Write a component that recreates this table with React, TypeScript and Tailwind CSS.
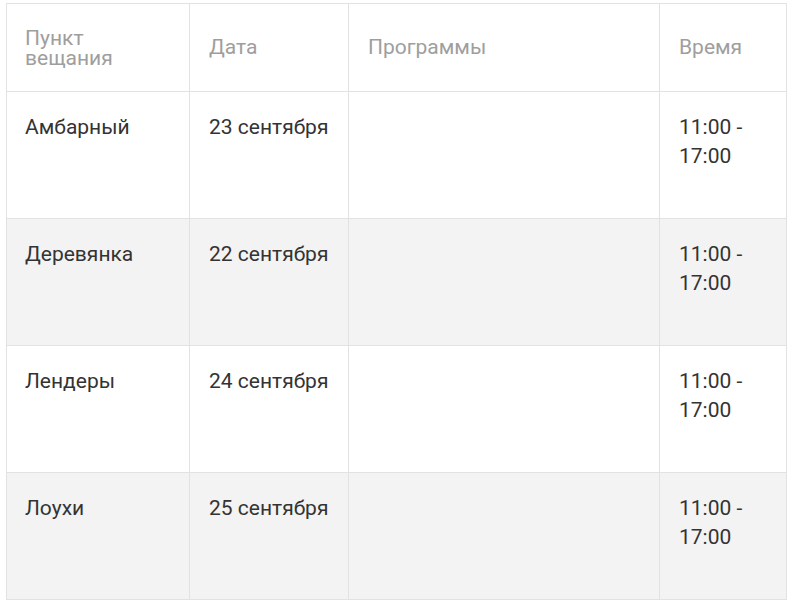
const rows = [
  { place: "Амбарный", date: "23 сентября" },
  { place: "Деревянка", date: "22 сентября" },
  { place: "Лендеры", date: "24 сентября" },
  { place: "Лоухи", date: "25 сентября" },
];

export default function App() {
  return (
    <div className="bg-white min-h-screen pl-[6px] pt-[3px] font-['Roboto',sans-serif]">
      <table className="w-[780px] table-fixed border-collapse border border-[#e2e2e2] text-[21px]">
        <colgroup>
          <col className="w-[183px]" />
          <col className="w-[159px]" />
          <col className="w-[311px]" />
          <col className="w-[127px]" />
        </colgroup>
        <thead>
          <tr className="h-[88px] text-[#9e9e9e] text-left">
            <th className="border border-[#e2e2e2] pl-[18px] pr-[20px] align-middle font-normal leading-[20px]">
              Пункт вещания
            </th>
            <th className="border border-[#e2e2e2] pl-[19px] align-middle font-normal leading-[29px]">
              Дата
            </th>
            <th className="border border-[#e2e2e2] pl-[19px] align-middle font-normal leading-[29px]">
              Программы
            </th>
            <th className="border border-[#e2e2e2] pl-[19px] align-middle font-normal leading-[29px]">
              Время
            </th>
          </tr>
        </thead>
        <tbody>
          {rows.map((r, i) => (
            <tr
              key={r.place}
              className={`h-[127px] text-[#333333] leading-[29px] ${
                i % 2 === 1 ? "bg-[#f3f3f3]" : "bg-white"
              }`}
            >
              <td className="border border-[#e2e2e2] pl-[18px] pt-[21px] align-top">
                {r.place}
              </td>
              <td className="border border-[#e2e2e2] pl-[19px] pt-[21px] align-top">
                {r.date}
              </td>
              <td className="border border-[#e2e2e2] pl-[19px] pt-[21px] align-top"></td>
              <td className="border border-[#e2e2e2] pl-[19px] pr-4 pt-[21px] align-top">
                11:00 - 17:00
              </td>
            </tr>
          ))}
        </tbody>
      </table>
    </div>
  );
}
